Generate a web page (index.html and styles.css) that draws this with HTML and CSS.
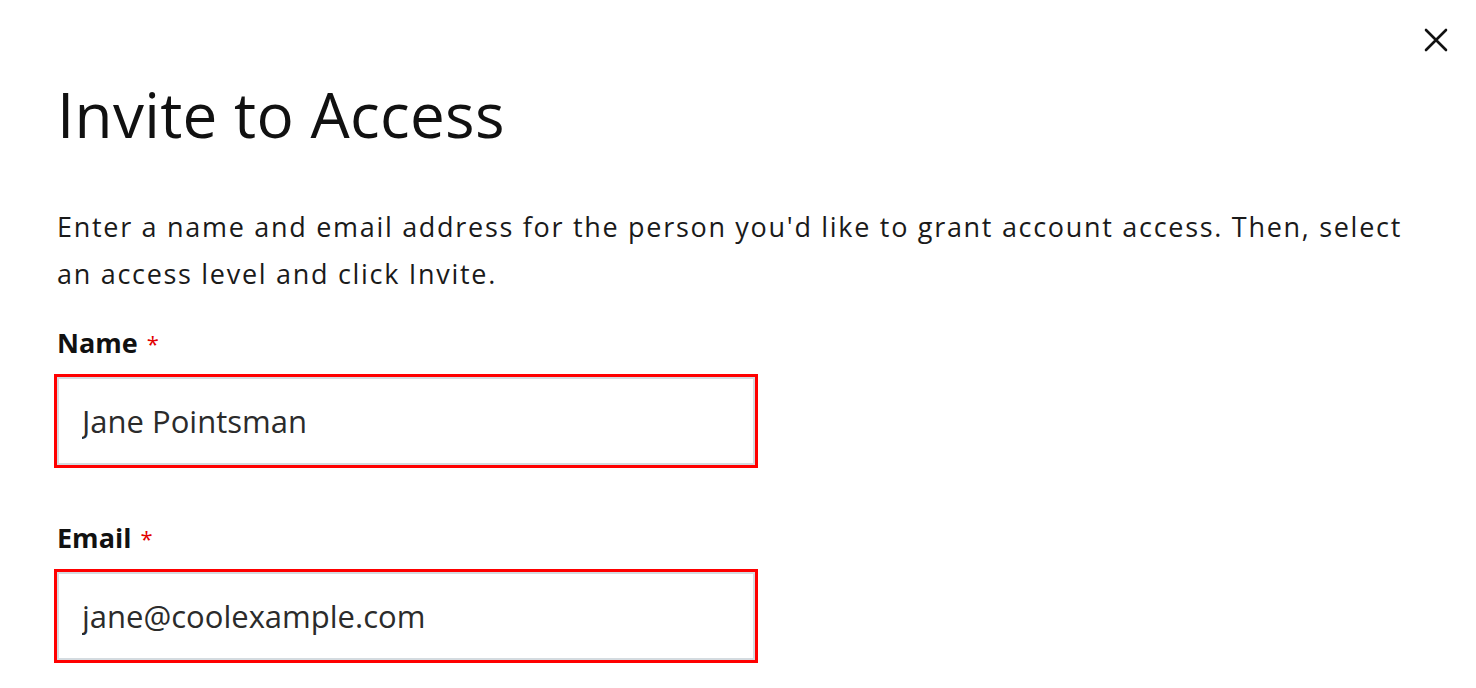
FILE: index.html
```html
<!DOCTYPE html>
<html lang="en">
<head>
    <meta charset="UTF-8">
    <meta name="viewport" content="width=device-width, initial-scale=1.0">
    <title>Invite to Access</title>
    <link rel="stylesheet" href="styles.css">
</head>
<body>

    <div class="modal">
        <button class="close-btn" aria-label="Close">
            <svg width="26" height="26" viewBox="0 0 26 26">
                <path d="M3 3 L23 23 M23 3 L3 23" stroke="#111" stroke-width="2.6" stroke-linecap="round" fill="none"/>
            </svg>
        </button>

        <h1 class="title">Invite to Access</h1>

        <p class="intro">Enter a name and email address for the person you'd like to grant account access. Then, select an access level and click Invite.</p>

        <div class="field">
            <label for="name">Name <span class="req">*</span></label>
            <input type="text" id="name" value="Jane Pointsman">
        </div>

        <div class="field">
            <label for="email">Email <span class="req">*</span></label>
            <input type="email" id="email" value="jane@coolexample.com">
        </div>
    </div>

</body>
</html>
```

FILE: styles.css
```css
body {
    font-family: "Open Sans", Arial, sans-serif;
    margin: 0;
    background-color: #fff;
    color: #111;
}

.modal {
    position: relative;
    padding: 0 57px 60px;
}

.close-btn {
    position: absolute;
    top: 27px;
    right: 27px;
    background: none;
    border: none;
    padding: 0;
    cursor: pointer;
}

.title {
    font-size: 62px;
    font-weight: 400;
    margin: 0;
    padding-top: 76px;
    line-height: 76px;
    letter-spacing: 0.3px;
}

.intro {
    font-size: 27px;
    line-height: 47px;
    letter-spacing: 1.7px;
    margin: 51px 0 0;
    max-width: 1362px;
    color: #1a1a1a;
}

.field {
    display: flex;
    flex-direction: column;
    margin-top: 28px;
}

.field + .field {
    margin-top: 55px;
}

label {
    font-size: 27px;
    font-weight: 700;
    line-height: 36px;
    margin-bottom: 16px;
}

.req {
    color: #e20000;
    font-weight: 400;
    font-size: 22px;
    vertical-align: top;
    margin-left: 2px;
}

input {
    width: 698px;
    height: 88px;
    box-sizing: border-box;
    padding: 0 23px;
    font-family: "Open Sans", Arial, sans-serif;
    font-size: 31px;
    color: #2b2b2b;
    border: 2px solid #d4dbe0;
    outline: 3px solid #ff0000;
}
```
